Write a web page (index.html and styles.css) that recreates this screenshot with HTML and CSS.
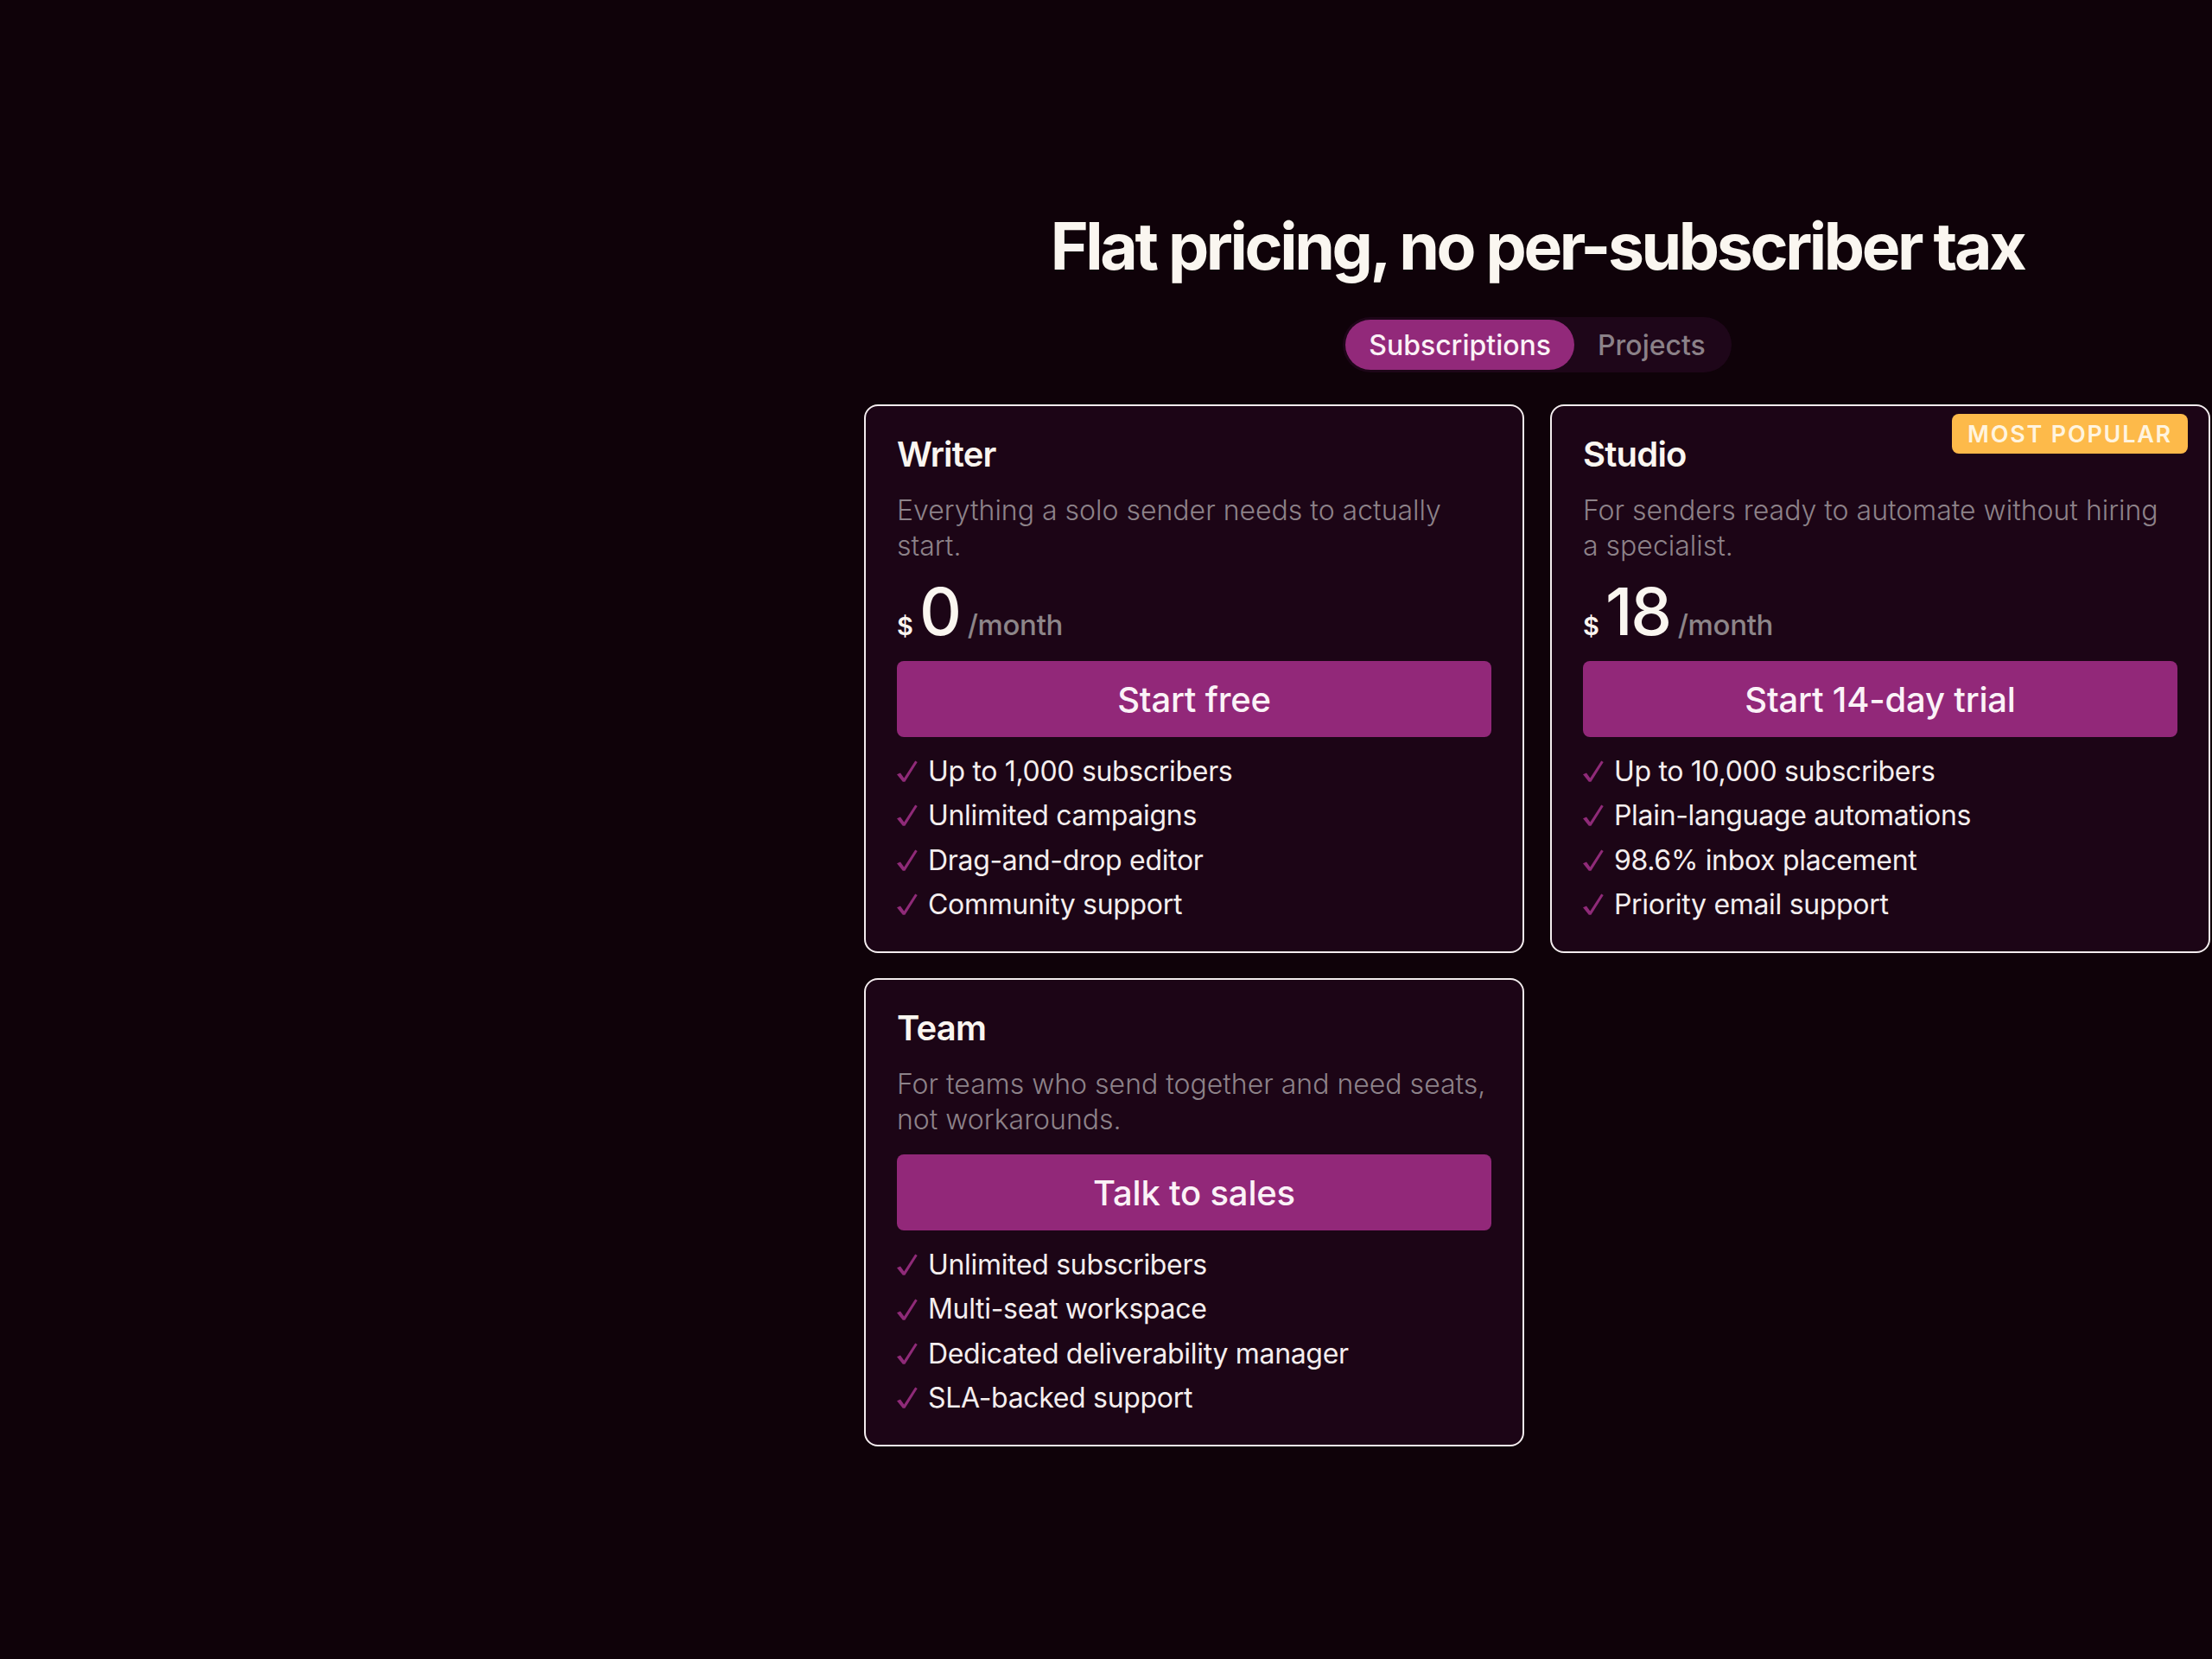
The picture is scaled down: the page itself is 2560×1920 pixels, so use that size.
FILE: index.html
```html
<!DOCTYPE html>
<html lang="en">
<head>
<meta charset="utf-8">
<title>Pricing</title>
<link rel="stylesheet" href="styles.css">
</head>
<body>
<main class="pricing">
  <h1 class="pricing-title">Flat pricing, no per-subscriber tax</h1>

  <div class="tabs" role="tablist">
    <button class="tab tab-active" role="tab">Subscriptions</button>
    <button class="tab" role="tab">Projects</button>
  </div>

  <section class="plans">
    <article class="plan">
      <h2 class="plan-name">Writer</h2>
      <p class="plan-desc">Everything a solo sender needs to actually start.</p>
      <div class="plan-price"><span class="cur">$</span><span class="amount">0</span><span class="per">/month</span></div>
      <a class="plan-cta" href="#">Start free</a>
      <ul class="features">
        <li><svg class="check" viewBox="0 0 24 25"><path d="M0 16.2 L4 14.6 L8.3 20.4 L21.2 0.4 L23.7 2 L9.4 24.8 L6.8 24.8 Z"/></svg>Up to 1,000 subscribers</li>
        <li><svg class="check" viewBox="0 0 24 25"><path d="M0 16.2 L4 14.6 L8.3 20.4 L21.2 0.4 L23.7 2 L9.4 24.8 L6.8 24.8 Z"/></svg>Unlimited campaigns</li>
        <li><svg class="check" viewBox="0 0 24 25"><path d="M0 16.2 L4 14.6 L8.3 20.4 L21.2 0.4 L23.7 2 L9.4 24.8 L6.8 24.8 Z"/></svg>Drag-and-drop editor</li>
        <li><svg class="check" viewBox="0 0 24 25"><path d="M0 16.2 L4 14.6 L8.3 20.4 L21.2 0.4 L23.7 2 L9.4 24.8 L6.8 24.8 Z"/></svg>Community support</li>
      </ul>
    </article>

    <article class="plan plan-featured">
      <span class="badge">MOST POPULAR</span>
      <h2 class="plan-name">Studio</h2>
      <p class="plan-desc">For senders ready to automate without hiring a specialist.</p>
      <div class="plan-price"><span class="cur">$</span><span class="amount">18</span><span class="per">/month</span></div>
      <a class="plan-cta" href="#">Start 14-day trial</a>
      <ul class="features">
        <li><svg class="check" viewBox="0 0 24 25"><path d="M0 16.2 L4 14.6 L8.3 20.4 L21.2 0.4 L23.7 2 L9.4 24.8 L6.8 24.8 Z"/></svg>Up to 10,000 subscribers</li>
        <li><svg class="check" viewBox="0 0 24 25"><path d="M0 16.2 L4 14.6 L8.3 20.4 L21.2 0.4 L23.7 2 L9.4 24.8 L6.8 24.8 Z"/></svg>Plain-language automations</li>
        <li><svg class="check" viewBox="0 0 24 25"><path d="M0 16.2 L4 14.6 L8.3 20.4 L21.2 0.4 L23.7 2 L9.4 24.8 L6.8 24.8 Z"/></svg>98.6% inbox placement</li>
        <li><svg class="check" viewBox="0 0 24 25"><path d="M0 16.2 L4 14.6 L8.3 20.4 L21.2 0.4 L23.7 2 L9.4 24.8 L6.8 24.8 Z"/></svg>Priority email support</li>
      </ul>
    </article>

    <article class="plan">
      <h2 class="plan-name">Team</h2>
      <p class="plan-desc">For teams who send together and need seats, not workarounds.</p>
      <a class="plan-cta" href="#">Talk to sales</a>
      <ul class="features">
        <li><svg class="check" viewBox="0 0 24 25"><path d="M0 16.2 L4 14.6 L8.3 20.4 L21.2 0.4 L23.7 2 L9.4 24.8 L6.8 24.8 Z"/></svg>Unlimited subscribers</li>
        <li><svg class="check" viewBox="0 0 24 25"><path d="M0 16.2 L4 14.6 L8.3 20.4 L21.2 0.4 L23.7 2 L9.4 24.8 L6.8 24.8 Z"/></svg>Multi-seat workspace</li>
        <li><svg class="check" viewBox="0 0 24 25"><path d="M0 16.2 L4 14.6 L8.3 20.4 L21.2 0.4 L23.7 2 L9.4 24.8 L6.8 24.8 Z"/></svg>Dedicated deliverability manager</li>
        <li><svg class="check" viewBox="0 0 24 25"><path d="M0 16.2 L4 14.6 L8.3 20.4 L21.2 0.4 L23.7 2 L9.4 24.8 L6.8 24.8 Z"/></svg>SLA-backed support</li>
      </ul>
    </article>
  </section>
</main>
</body>
</html>
```

FILE: styles.css
```css
html, body {
  margin: 0;
  padding: 0;
}

body {
  background: #0f0209;
  color: #faf6f0;
  font-family: Inter, "Noto Sans", "Liberation Sans", sans-serif;
  min-height: 1920px;
}

.pricing {
  width: 1558px;
  margin-left: 1000px;
  padding-top: 239px;
  display: flex;
  flex-direction: column;
  align-items: center;
}

.pricing-title {
  margin: 0;
  font-size: 75px;
  line-height: 91px;
  font-weight: 700;
  letter-spacing: -0.045em;
  color: #faf6f0;
  white-space: nowrap;
}

/* segmented toggle */
.tabs {
  margin-top: 37px;
  display: flex;
  padding: 3px;
  border-radius: 40px;
  background: #1e0619;
}

.tab {
  border: 0;
  background: transparent;
  height: 58px;
  padding: 0 27px;
  border-radius: 29px;
  font-family: inherit;
  font-size: 32px;
  font-weight: 500;
  letter-spacing: 0;
  color: #8b8188;
}

.tab-active {
  background: #92297a;
  color: #fbf1f6;
}

/* plan grid */
.plans {
  align-self: stretch;
  margin-top: 37px;
  display: grid;
  grid-template-columns: 1fr 1fr;
  gap: 29px 30px;
}

.plan {
  position: relative;
  display: flex;
  flex-direction: column;
  padding: 32px 36px 29px;
  border: 2px solid #f3ecee;
  border-radius: 16px;
  background: #1c0516;
}

.badge {
  position: absolute;
  top: 9px;
  right: 24px;
  height: 46px;
  padding: 0 18px;
  display: flex;
  align-items: center;
  border-radius: 8px;
  background: #fdba4a;
  color: #fff4df;
  font-size: 27px;
  font-weight: 600;
  letter-spacing: 0.065em;
}

.plan-name {
  margin: 0;
  font-size: 40px;
  line-height: 48px;
  font-weight: 600;
  letter-spacing: -0.02em;
}

.plan-desc {
  margin: 20px 0 0;
  padding-right: 3px;
  font-size: 32px;
  line-height: 41px;
  font-weight: 300;
  letter-spacing: 0;
  color: #8d8289;
}

.plan-price {
  margin-top: 17px;
  height: 76px;
  display: flex;
  align-items: baseline;
  line-height: 76px;
}

.cur {
  font-size: 29px;
  line-height: 1;
  font-weight: 600;
  margin-right: 7px;
}

.amount {
  font-size: 76px;
  line-height: 76px;
  font-weight: 500;
  letter-spacing: -0.03em;
  margin-right: 9px;
}

.per {
  font-size: 33px;
  line-height: 1;
  font-weight: 500;
  letter-spacing: -0.01em;
  color: #8d8589;
}

.plan-cta {
  margin-top: 20px;
  height: 88px;
  display: flex;
  align-items: center;
  justify-content: center;
  border-radius: 8px;
  background: #922879;
  color: #fbf2f7;
  text-decoration: none;
  font-size: 40px;
  font-weight: 500;
  letter-spacing: -0.005em;
}

.features {
  list-style: none;
  margin: 14px 0 0;
  padding: 0;
}

.features li {
  display: flex;
  align-items: baseline;
  font-size: 32px;
  line-height: 51.3px;
  letter-spacing: -0.01em;
  color: #f4eeee;
}

.check {
  width: 24px;
  height: 25px;
  margin-right: 12px;
  fill: #8f2a78;
  flex: none;
  align-self: center;
}
```
